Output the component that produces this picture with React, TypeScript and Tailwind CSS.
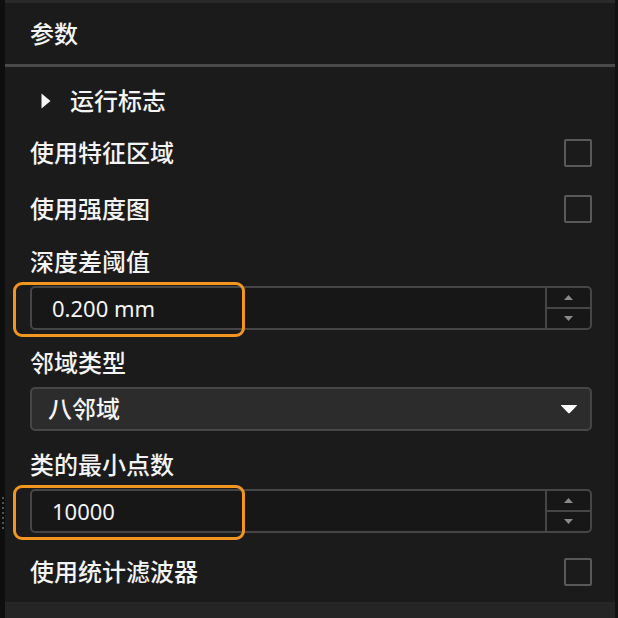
import React from 'react';

const font = { fontFamily: '"Noto Sans", "Noto Sans CJK SC", sans-serif' };

const Checkbox: React.FC = () => (
    <div className="w-[28px] h-[28px] border-2 border-[#595959] rounded-[2px] bg-[#1b1b1b]" />
);

const CheckRow: React.FC<{ label: string; className?: string }> = ({ label, className }) => (
    <div className={`flex items-center justify-between h-[40px] ${className ?? ''}`}>
        <span>{label}</span>
        <Checkbox />
    </div>
);

const Label: React.FC<{ text: string; className?: string }> = ({ text, className }) => (
    <div className={`h-[32px] flex items-center ${className ?? ''}`}>{text}</div>
);

const SpinInput: React.FC<{ value: string; className?: string }> = ({ value, className }) => (
    <div className={`relative ${className ?? ''}`}>
        <div className="flex h-[44px] border-2 border-[#464646] rounded-[5px] bg-[#171717] overflow-hidden">
            <div className="flex-1 flex items-center pl-[20px] text-[22px] font-normal">{value}</div>
            <div className="w-[45px] flex flex-col border-l-2 border-[#464646]">
                <div className="flex-1 flex items-center justify-center border-b-2 border-[#464646]">
                    <svg width="9" height="5" viewBox="0 0 9 5">
                        <path d="M4.5 0 L9 5 L0 5 Z" fill="#8a8a8a" />
                    </svg>
                </div>
                <div className="flex-1 flex items-center justify-center">
                    <svg width="9" height="5" viewBox="0 0 9 5">
                        <path d="M0 0 L9 0 L4.5 5 Z" fill="#8a8a8a" />
                    </svg>
                </div>
            </div>
        </div>
        {/* highlight */}
        <div className="absolute left-[-17px] top-[-4px] w-[232px] h-[55px] border-[3px] border-[#f2961f] rounded-[9px]" />
    </div>
);

export default function App() {
    return (
        <div className="w-[618px] h-[618px] flex bg-[#1b1b1b] text-[#f4f4f4] text-[24px] font-medium leading-none overflow-hidden" style={font}>
            {/* left splitter */}
            <div className="w-[5px] bg-[#0e0e0e] flex flex-col items-center pt-[497px] gap-[3px]">
                {[0, 1, 2, 3, 4, 5, 6].map((i) => (
                    <div key={i} className="w-[2px] h-[2px] bg-[#555555]" />
                ))}
            </div>

            <div className="flex-1 flex flex-col">
                <div className="h-[3px] bg-[#2a2a2a]" />
                <div className="h-[61px] flex items-center px-[25px]">参数</div>
                <div className="h-[3px] bg-[#4a4a4a]" />

                <div className="flex-1 flex flex-col px-[25px] pr-[23px]">
                    <div className="flex items-center h-[40px] mt-[14px] pl-[11px]">
                        <svg width="10" height="16" viewBox="0 0 10 16" className="mr-[19px]">
                            <path d="M0.5 0.5 L9.5 8 L0.5 15.5 Z" fill="#f4f4f4" />
                        </svg>
                        <span>运行标志</span>
                    </div>

                    <CheckRow label="使用特征区域" className="mt-[12px]" />
                    <CheckRow label="使用强度图" className="mt-[16px]" />

                    <Label text="深度差阈值" className="mt-[17px]" />
                    <SpinInput value="0.200 mm" className="mt-[8px]" />

                    <Label text="邻域类型" className="mt-[17px]" />
                    <div className="mt-[8px] h-[44px] flex items-center justify-between border-2 border-[#464646] rounded-[5px] bg-[#2c2c2c] pl-[16px] pr-[12px]">
                        <span>八邻域</span>
                        <svg width="18" height="10" viewBox="0 0 18 10">
                            <path d="M1.5 1 L16.5 1 Q17.5 1 16.8 1.8 L9.8 9 Q9 9.8 8.2 9 L1.2 1.8 Q0.5 1 1.5 1 Z" fill="#ffffff" />
                        </svg>
                    </div>

                    <Label text="类的最小点数" className="mt-[18px]" />
                    <SpinInput value="10000" className="mt-[8px]" />

                    <CheckRow label="使用统计滤波器" className="mt-[19px]" />
                </div>

                <div className="h-[16px] bg-[#252525]" />
            </div>

            <div className="w-[3px] bg-[#121212]" />
        </div>
    );
}
